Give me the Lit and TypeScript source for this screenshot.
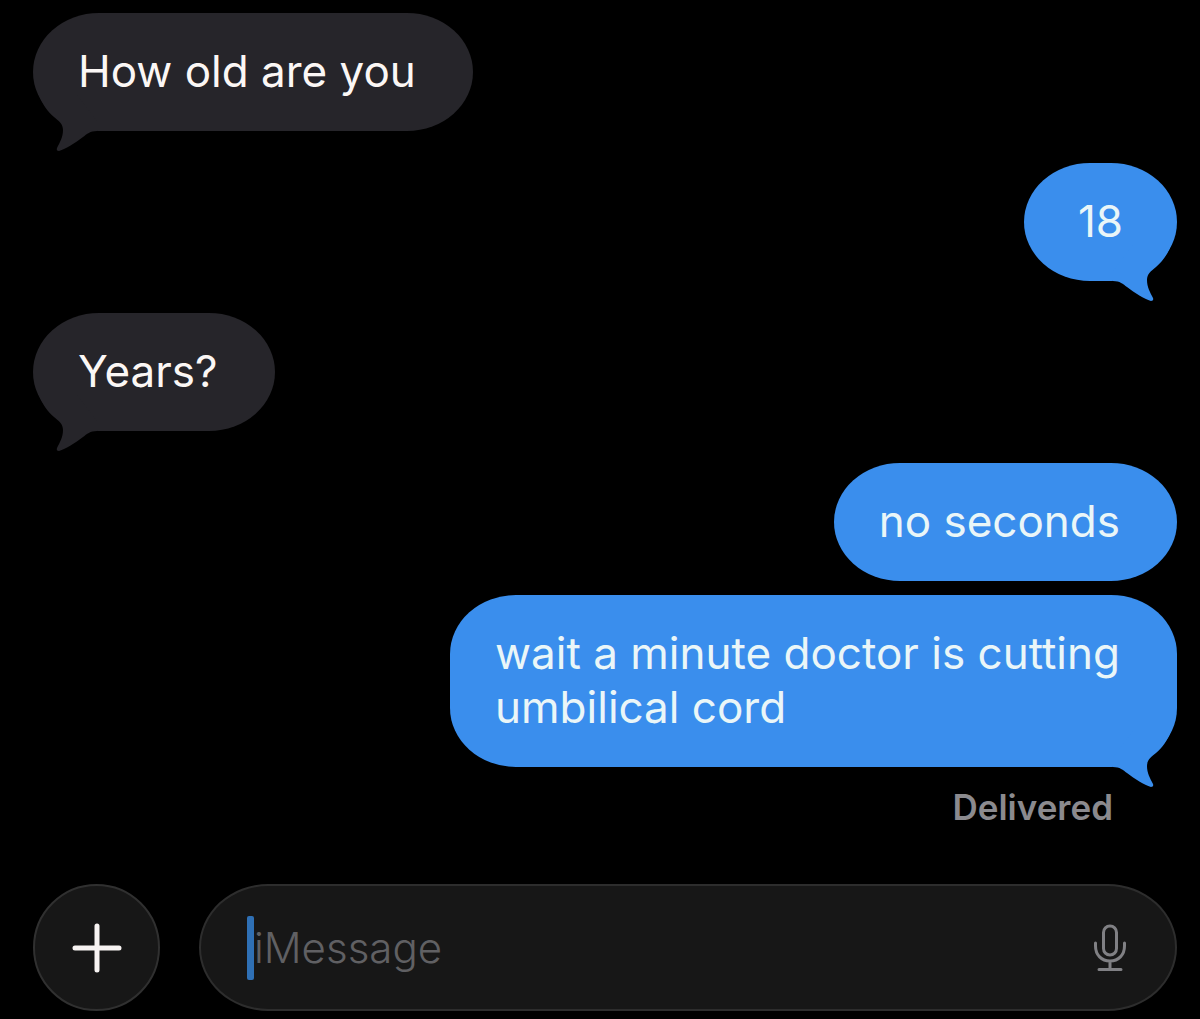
import { LitElement, html, css } from 'lit';
import { customElement, property, state } from 'lit/decorators.js';
import { classMap } from 'lit/directives/class-map.js';

interface Message {
    text: string;
    sent: boolean;
    tail: boolean;
}

@customElement('message-bubble')
class MessageBubble extends LitElement {

    static styles = css`
        :host {
            display: flex;
        }

        .bubble {
            position: relative;
            box-sizing: border-box;
            min-width: 153px;
            max-width: 90%;
            padding: 31px 57px 33px 45px;
            border-radius: 66px / 59px;
            background-color: #26252a;
            color: #fbf7f5;
            line-height: 54px;
            white-space: pre-line;
        }

        .sent {
            margin-left: auto;
            background-color: #3a8eed;
            color: #eaf6f8;
        }

        .short {
            padding-left: 51px;
            padding-right: 51px;
            text-align: center;
        }

        /* the tail hangs below the corner of the bubble */
        .tail {
            position: absolute;
            left: 0;
            bottom: -20px;
            width: 64px;
            height: 60px;
            fill: #26252a;
            transform: scaleX(-1);
        }

        .sent .tail {
            left: auto;
            right: 0;
            fill: #3a8eed;
            transform: none;
        }
    `;

    @property() text = '';
    @property({ type: Boolean }) sent = false;
    @property({ type: Boolean }) tail = false;

    render() {
        const classes = { bubble: true, sent: this.sent, short: this.text.length < 4 };
        return html`<div class=${classMap(classes)}>${this.text}${this.tail ? html`
            <svg class="tail" viewBox="0 0 64 60" aria-hidden="true">
                <path d="M0 30 L0 40 C7 40 10 43 14 46 C22 52 31 58 38 60 Q41 60 40 57 C37 51 34 46 34 39 C34 33 38 30 43 26 C49 21 55 13 58 4 L20 4 Z"/>
            </svg>` : ''}</div>`;
    }
}

@customElement('message-composer')
class MessageComposer extends LitElement {

    static styles = css`
        :host {
            display: flex;
            gap: 39px;
        }

        button {
            display: flex;
            align-items: center;
            justify-content: center;
            padding: 0;
            border: none;
            background: none;
            color: inherit;
        }

        .add {
            flex: none;
            width: 127px;
            height: 127px;
            border: 2px solid #303030;
            border-radius: 50%;
            background-color: #171717;
        }

        .field {
            flex: 1;
            min-width: 0;
            display: flex;
            align-items: center;
            box-sizing: border-box;
            height: 127px;
            padding: 0 48px 0 46px;
            border: 2px solid #2d2d2d;
            border-radius: 70px / 64px;
            background-color: #171717;
        }

        .caret {
            flex: none;
            width: 7px;
            height: 64px;
            border-radius: 2px;
            background-color: #2f70b5;
        }

        input {
            flex: 1;
            min-width: 0;
            height: 64px;
            padding: 0;
            border: none;
            outline: none;
            background: none;
            color: #fbf7f5;
            font: inherit;
            font-size: 42px;
            caret-color: #2f70b5;
        }

        input::placeholder {
            color: #606063;
            font-weight: 300;
            opacity: 1;
        }

        .plus {
            width: 50px;
            height: 50px;
            stroke: #f7f3f2;
            stroke-width: 5;
            stroke-linecap: round;
        }

        .mic {
            width: 34px;
            height: 50px;
            fill: none;
            stroke: #808084;
            stroke-width: 3;
            stroke-linecap: round;
        }
    `;

    @state() private value = '';

    private onInput(e: Event) {
        this.value = (e.target as HTMLInputElement).value;
    }

    render() {
        return html`
            <button class="add" type="button" aria-label="Add attachment">
                <svg class="plus" viewBox="0 0 50 50" aria-hidden="true">
                    <path d="M25 3V47M3 25H47"/>
                </svg>
            </button>
            <div class="field">
                ${this.value ? '' : html`<span class="caret"></span>`}
                <input type="text" aria-label="iMessage" placeholder="iMessage" .value=${this.value} @input=${this.onInput}>
                <button type="button" aria-label="Dictate">
                    <svg class="mic" viewBox="0 0 34 50" aria-hidden="true">
                        <rect x="10.5" y="3" width="13" height="29" rx="6.5"/>
                        <path d="M2.5 20V23C2.5 32 8.5 38 17 38S31.5 32 31.500 23V20M17 38V46M6 46.500H28"/>
                    </svg>
                </button>
            </div>
        `;
    }
}

@customElement('app-root')
class AppRoot extends LitElement {

    static styles = css`
        :host {
            display: flex;
            flex-direction: column;
            box-sizing: border-box;
            min-height: 100vh;
            padding: 13px 23px 8px 33px;
            background-color: #000;
            font-family: Inter, "Liberation Sans", sans-serif;
            font-size: 44px;
        }

        .thread {
            display: flex;
            flex-direction: column;
            gap: 32px;
        }

        .group {
            display: flex;
            flex-direction: column;
            gap: 14px;
        }

        .status {
            margin: 20px 64px 0 0;
            color: #8b8a8e;
            font-size: 35px;
            font-weight: 600;
            line-height: 40px;
            text-align: right;
        }

        message-composer {
            margin-top: auto;
            padding-top: 40px;
        }
    `;

    // consecutive messages from one sender share a group
    private groups: Message[][] = [
        [{ text: 'How old are you', sent: false, tail: true }],
        [{ text: '18', sent: true, tail: true }],
        [{ text: 'Years?', sent: false, tail: true }],
        [
            { text: 'no seconds', sent: true, tail: false },
            { text: 'wait a minute doctor is cutting\numbilical cord', sent: true, tail: true },
        ],
    ];

    render() {
        return html`
            <div class="thread">
                ${this.groups.map(group => html`
                    <div class="group">
                        ${group.map(m => html`
                            <message-bubble .text=${m.text} .sent=${m.sent} .tail=${m.tail}></message-bubble>
                        `)}
                    </div>
                `)}
            </div>
            <p class="status">Delivered</p>
            <message-composer></message-composer>
        `;
    }
}
